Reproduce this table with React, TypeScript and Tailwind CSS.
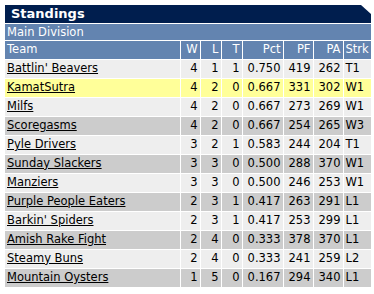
const teams = [
  { name: "Battlin' Beavers", w: 4, l: 1, t: 1, pct: '0.750', pf: 419, pa: 262, strk: 'T1' },
  { name: 'KamatSutra', w: 4, l: 2, t: 0, pct: '0.667', pf: 331, pa: 302, strk: 'W1', mine: true },
  { name: 'Milfs', w: 4, l: 2, t: 0, pct: '0.667', pf: 273, pa: 269, strk: 'W1' },
  { name: 'Scoregasms', w: 4, l: 2, t: 0, pct: '0.667', pf: 254, pa: 265, strk: 'W3' },
  { name: 'Pyle Drivers', w: 3, l: 2, t: 1, pct: '0.583', pf: 244, pa: 204, strk: 'T1' },
  { name: 'Sunday Slackers', w: 3, l: 3, t: 0, pct: '0.500', pf: 288, pa: 370, strk: 'W1' },
  { name: 'Manziers', w: 3, l: 3, t: 0, pct: '0.500', pf: 246, pa: 253, strk: 'W1' },
  { name: 'Purple People Eaters', w: 2, l: 3, t: 1, pct: '0.417', pf: 263, pa: 291, strk: 'L1' },
  { name: "Barkin' Spiders", w: 2, l: 3, t: 1, pct: '0.417', pf: 253, pa: 299, strk: 'L1' },
  { name: 'Amish Rake Fight', w: 2, l: 4, t: 0, pct: '0.333', pf: 378, pa: 370, strk: 'L1' },
  { name: 'Steamy Buns', w: 2, l: 4, t: 0, pct: '0.333', pf: 241, pa: 259, strk: 'L2' },
  { name: 'Mountain Oysters', w: 1, l: 5, t: 0, pct: '0.167', pf: 294, pa: 340, strk: 'L1' },
];

const cols = ['W', 'L', 'T', 'Pct', 'PF', 'PA'];

export default function App() {
  return (
    <div className="min-h-screen bg-white p-[5px] font-['DejaVu_Sans',Verdana,sans-serif] text-[11.5px]">
      <div className="w-[366px]">
        <div className="h-[18px] bg-[#001e4e] pl-[6px] text-[13px] font-bold leading-[18px] text-white [clip-path:polygon(0_0,calc(100%-10px)_0,100%_9px,100%_100%,0_100%)]">
          Standings
        </div>
        <div className="mt-px h-[16px] bg-[#6384b0] pl-[2px] leading-[16px] text-white">Main Division</div>
        <table className="mt-px w-full border-collapse table-fixed">
          <colgroup>
            <col className="w-[175px]" />
            <col className="w-[20px]" />
            <col className="w-[21px]" />
            <col className="w-[21px]" />
            <col className="w-[41px]" />
            <col className="w-[30px]" />
            <col className="w-[30px]" />
            <col className="w-[28px]" />
          </colgroup>
          <thead>
            <tr className="h-[18px] bg-[#6384b0] text-white">
              <th className="p-0 pl-[2px] text-left font-normal">Team</th>
              {cols.map((c) => (
                <th key={c} className="border-l border-white p-0 pr-[2px] text-right font-normal">
                  {c}
                </th>
              ))}
              <th className="border-l border-white p-0 pl-[2px] text-left font-normal">Strk</th>
            </tr>
          </thead>
          <tbody>
            {teams.map((tm, i) => {
              const bg = tm.mine ? 'bg-[#ffff99]' : i % 2 === 1 ? 'bg-[#cccccc]' : 'bg-[#eeeeee]';
              return (
                <tr key={tm.name} className={`h-[19px] border-t border-white text-black ${bg}`}>
                  <td className="p-0 pl-[2px]">
                    <a className="underline">{tm.name}</a>
                  </td>
                  {[tm.w, tm.l, tm.t, tm.pct, tm.pf, tm.pa].map((v, j) => (
                    <td key={j} className="border-l border-white p-0 pr-[2px] text-right">
                      {v}
                    </td>
                  ))}
                  <td className="border-l border-white p-0 pl-[2px]">{tm.strk}</td>
                </tr>
              );
            })}
          </tbody>
        </table>
      </div>
    </div>
  );
}
